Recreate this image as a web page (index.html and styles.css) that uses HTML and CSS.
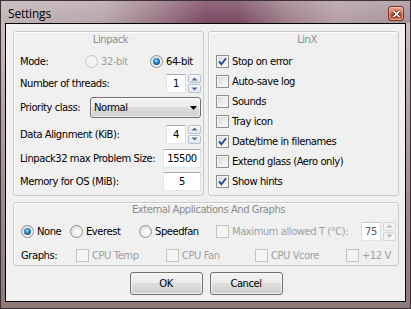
FILE: index.html
```html
<!DOCTYPE html>
<html>
<head>
    <title>Settings</title>
    <link rel="stylesheet" href="styles.css">
</head>
<body>
    <div class="window">
        <div class="titlebar">
            <span class="title">Settings</span>
            <span class="close-btn">
                <svg width="9" height="8" viewBox="0 0 9 8">
                    <path d="M1.5 1 L7.5 7 M7.5 1 L1.5 7" stroke="#5a2a20" stroke-width="3.2"/>
                    <path d="M1.5 1 L7.5 7 M7.5 1 L1.5 7" stroke="#fff" stroke-width="1.7"/>
                </svg>
            </span>
        </div>

        <div class="client">
            <div class="groups">
                <div class="group linpack">
                    <div class="group-title">Linpack</div>
                    <div class="row mode-row">
                        <span class="mode-label">Mode:</span>
                        <span class="option disabled mode-32"><span class="radio"></span>32-bit</span>
                        <span class="option"><span class="radio checked"></span>64-bit</span>
                    </div>
                    <div class="row">
                        <span>Number of threads:</span>
                        <span class="spinner">
                            <span class="field small">1</span>
                            <span class="spin">
                                <span class="spin-btn"><svg width="7" height="4" viewBox="0 0 7 4"><path d="M0.5 3.5 L3.5 0.5 L6.5 3.5Z" fill="#56698c"/></svg></span>
                                <span class="spin-btn"><svg width="7" height="4" viewBox="0 0 7 4"><path d="M0.5 0.5 L3.5 3.5 L6.5 0.5Z" fill="#56698c"/></svg></span>
                            </span>
                        </span>
                    </div>
                    <div class="row">
                        <span>Priority class:</span>
                        <span class="select">
                            <span>Normal</span>
                            <svg width="7" height="4" viewBox="0 0 7 4"><path d="M0 0 L7 0 L3.5 4Z" fill="#000"/></svg>
                        </span>
                    </div>
                    <div class="row">
                        <span>Data Alignment (KiB):</span>
                        <span class="spinner">
                            <span class="field small">4</span>
                            <span class="spin">
                                <span class="spin-btn"><svg width="7" height="4" viewBox="0 0 7 4"><path d="M0.5 3.5 L3.5 0.5 L6.5 3.5Z" fill="#56698c"/></svg></span>
                                <span class="spin-btn"><svg width="7" height="4" viewBox="0 0 7 4"><path d="M0.5 0.5 L3.5 3.5 L6.5 0.5Z" fill="#56698c"/></svg></span>
                            </span>
                        </span>
                    </div>
                    <div class="row">
                        <span>Linpack32 max Problem Size:</span>
                        <span class="field wide">15500</span>
                    </div>
                    <div class="row">
                        <span>Memory for OS (MiB):</span>
                        <span class="field wide">5</span>
                    </div>
                </div>

                <div class="group linx">
                    <div class="group-title">LinX</div>
                    <div class="check-row"><span class="checkbox checked"><svg width="11" height="11" viewBox="0 0 11 11"><path d="M2 5.5 L4.5 8.2 L9 2.2" fill="none" stroke="#2f4a8e" stroke-width="1.9"/></svg></span>Stop on error</div>
                    <div class="check-row"><span class="checkbox"></span>Auto-save log</div>
                    <div class="check-row"><span class="checkbox"></span>Sounds</div>
                    <div class="check-row"><span class="checkbox"></span>Tray icon</div>
                    <div class="check-row"><span class="checkbox checked"><svg width="11" height="11" viewBox="0 0 11 11"><path d="M2 5.5 L4.5 8.2 L9 2.2" fill="none" stroke="#2f4a8e" stroke-width="1.9"/></svg></span>Date/time in filenames</div>
                    <div class="check-row"><span class="checkbox"></span>Extend glass (Aero only)</div>
                    <div class="check-row"><span class="checkbox checked"><svg width="11" height="11" viewBox="0 0 11 11"><path d="M2 5.5 L4.5 8.2 L9 2.2" fill="none" stroke="#2f4a8e" stroke-width="1.9"/></svg></span>Show hints</div>
                </div>
            </div>

            <div class="group external">
                <div class="group-title">External Applications And Graphs</div>
                <div class="apps-row">
                    <span class="option app-none"><span class="radio checked"></span>None</span>
                    <span class="option app-everest"><span class="radio"></span>Everest</span>
                    <span class="option app-speedfan"><span class="radio"></span>Speedfan</span>
                    <span class="option disabled max-temp"><span class="checkbox"></span>Maximum allowed T (°C):</span>
                    <span class="spinner">
                        <span class="field small off">75</span>
                        <span class="spin">
                            <span class="spin-btn off"><svg width="7" height="4" viewBox="0 0 7 4"><path d="M0.5 3.5 L3.5 0.5 L6.5 3.5Z" fill="#b4b8be"/></svg></span>
                            <span class="spin-btn off"><svg width="7" height="4" viewBox="0 0 7 4"><path d="M0.5 0.5 L3.5 3.5 L6.5 0.5Z" fill="#b4b8be"/></svg></span>
                        </span>
                    </span>
                </div>
                <div class="graphs-row">
                    <span>Graphs:</span>
                    <span class="option disabled"><span class="checkbox"></span>CPU Temp</span>
                    <span class="option disabled"><span class="checkbox"></span>CPU Fan</span>
                    <span class="option disabled"><span class="checkbox"></span>CPU Vcore</span>
                    <span class="option disabled"><span class="checkbox"></span>+12 V</span>
                </div>
            </div>

            <div class="buttons">
                <span class="btn">OK</span>
                <span class="btn">Cancel</span>
            </div>
        </div>
    </div>
</body>
</html>
```

FILE: styles.css
```css
body {
    margin: 0;
    background: #fff;
    font-family: Tahoma, "DejaVu Sans", sans-serif;
    font-size: 10px;
    letter-spacing: -0.45px;
    color: #000;
}

/* window frame */
.window {
    width: 411px;
    height: 309px;
    box-sizing: border-box;
    border: 1px solid #3e3034;
    padding: 0 4px 6px;
    background: linear-gradient(to bottom, #cfc5c8 0%, #b8a8ab 30%, #9c8688 70%, #8e7878 100%);
    display: flex;
    flex-direction: column;
}
.titlebar {
    height: 22px;
    margin: 0 -4px;
    padding: 0 6px 0 7px;
    display: flex;
    align-items: center;
    justify-content: space-between;
    background:
        linear-gradient(to bottom, rgba(255,255,255,0.18), rgba(255,255,255,0)),
        linear-gradient(to right, #c2b4b7 0%, #b7a5aa 25%, #9a7886 38%, #7b4862 50%, #7a4b63 58%, #9e7f8b 70%, #b49ea6 82%, #a8929a 100%);
}
.title {
    font-family: "Open Sans", "Liberation Sans", sans-serif;
    font-size: 12px;
    letter-spacing: -0.2px;
    padding-top: 2px;
}
.close-btn {
    width: 16px;
    height: 15px;
    box-sizing: border-box;
    align-self: flex-start;
    margin-top: 5px;
    border: 1px solid #6b3328;
    border-radius: 3px;
    background: linear-gradient(to bottom, #e9a896 0%, #d9735c 45%, #c2462c 55%, #d0694c 100%);
    box-shadow: inset 0 0 0 1px rgba(255,220,210,0.5);
    display: flex;
    align-items: center;
    justify-content: center;
}

.client {
    flex: 1;
    border: 1px solid #000;
    background: #f0f0f0;
    padding: 7px 6px 6px 7px;
    display: flex;
    flex-direction: column;
}

/* group boxes */
.groups {
    display: grid;
    grid-template-columns: 191px 191px;
    gap: 4px;
    height: 165px;
}
.group {
    box-sizing: border-box;
    border: 1px solid #cacaca;
    border-radius: 3px;
    box-shadow: inset 1px 1px 0 #fff;
}
.group-title {
    line-height: 16px;
    text-align: center;
    color: #8c8c8c;
}

.linpack {
    display: grid;
    grid-template-rows: 18px 23px 21px 27px 26px 22px 24px;
    padding: 0 2px 2px 6px;
}
.row {
    display: flex;
    align-items: center;
    justify-content: space-between;
}
.mode-row {
    justify-content: flex-start;
}
.mode-label {
    width: 65px;
}
.mode-32 {
    width: 65px;
}

.linx {
    display: grid;
    grid-template-rows: 19px repeat(7, 20px);
    align-content: start;
    padding-left: 7px;
}
.check-row {
    display: flex;
    align-items: center;
    gap: 3px;
}

/* controls */
.option {
    display: flex;
    align-items: center;
    gap: 3px;
}
.disabled {
    color: #a0a0a0;
}
.radio {
    position: relative;
    width: 13px;
    height: 13px;
    box-sizing: border-box;
    border-radius: 50%;
    border: 1px solid #8e8f8f;
    background: radial-gradient(circle at 60% 65%, #ffffff 0%, #f2f2f2 40%, #cfcfcf 100%);
    flex-shrink: 0;
}
.radio.checked::after {
    content: "";
    position: absolute;
    left: 2px;
    top: 2px;
    width: 7px;
    height: 7px;
    border-radius: 50%;
    background: radial-gradient(circle at 45% 40%, #b8e6ff 0%, #3c9ae0 30%, #17508a 70%, #0e3a66 100%);
}
.disabled .radio {
    border-color: #c4c4c4;
    background: #f4f4f4;
}
.checkbox {
    width: 13px;
    height: 13px;
    box-sizing: border-box;
    border: 1px solid #8e8f8f;
    background: linear-gradient(135deg, #d0d3d7 0%, #eceef0 55%, #fbfbfb 100%);
    box-shadow: inset 0 0 0 1px #f6f6f6;
    display: flex;
    align-items: center;
    justify-content: center;
    flex-shrink: 0;
}
.disabled .checkbox {
    border-color: #c4c4c4;
    background: #f4f4f4;
    box-shadow: none;
}

.field {
    box-sizing: border-box;
    height: 19px;
    border: 1px solid #abadb3;
    border-color: #abadb3 #dbdfe6 #e3e9ef #e2e3ea;
    background: #fff;
    display: flex;
    align-items: center;
    justify-content: center;
}
.field.small {
    width: 20px;
}
.field.wide {
    width: 38px;
}
.field.off {
    color: #555;
    border-color: #c6c6c6 #dedede #e4e4e4 #dedede;
}
.spinner {
    display: flex;
    align-items: center;
    gap: 2px;
}
.spin {
    width: 13px;
    height: 19px;
    display: flex;
    flex-direction: column;
    gap: 1px;
}
.spin-btn {
    flex: 1;
    box-sizing: border-box;
    border: 1px solid #b8c0cb;
    border-radius: 2px;
    background: linear-gradient(to bottom, #f8f9fb, #e2e7ee);
    display: flex;
    align-items: center;
    justify-content: center;
}
.spin-btn.off {
    border-color: #d4d6d9;
    background: #f4f4f4;
}

.select {
    width: 111px;
    height: 21px;
    box-sizing: border-box;
    border: 1px solid #707070;
    border-radius: 3px;
    padding: 0 3px 0 3px;
    background: linear-gradient(to bottom, #f3f3f3 0%, #ebebeb 50%, #dddddd 50%, #d0d0d0 100%);
    box-shadow: inset 0 0 0 1px rgba(255,255,255,0.6);
    display: flex;
    align-items: center;
    justify-content: space-between;
}

/* external apps */
.external {
    margin-top: 6px;
    height: 64px;
    display: grid;
    grid-template-rows: 14px 28px 20px;
    padding: 0 2px 0 7px;
}
.external .group-title {
    line-height: 14px;
}
.apps-row {
    display: flex;
    align-items: center;
}
.app-none {
    width: 49px;
}
.app-everest {
    width: 69px;
}
.app-speedfan {
    width: 77px;
}
.max-temp {
    flex: 1;
}
.graphs-row {
    display: grid;
    grid-template-columns: 55px 90px 89px 91px 1fr;
    align-items: center;
}

/* buttons */
.buttons {
    margin-top: 6px;
    display: flex;
    justify-content: center;
    gap: 7px;
}
.btn {
    width: 73px;
    height: 23px;
    box-sizing: border-box;
    border: 1px solid #707070;
    border-radius: 3px;
    background: linear-gradient(to bottom, #f2f2f2 0%, #ebebeb 50%, #dddddd 50%, #cfcfcf 100%);
    box-shadow: inset 0 0 0 1px rgba(255,255,255,0.7);
    display: flex;
    align-items: center;
    justify-content: center;
}
```
